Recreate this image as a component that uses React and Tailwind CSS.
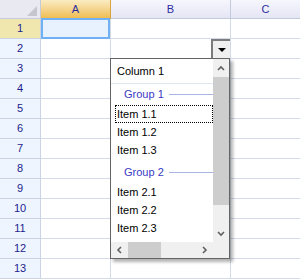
import React from 'react';

const rowNums = [1, 2, 3, 4, 5, 6, 7, 8, 9, 10, 11, 12, 13];

function Chevron({ dir }) {
  const paths = {
    up: 'M1 5 L4 2 L7 5',
    down: 'M1 2 L4 5 L7 2',
    left: 'M5 1 L2 4 L5 7',
    right: 'M2 1 L5 4 L2 7',
  };
  const box = dir === 'up' || dir === 'down' ? '0 0 8 7' : '0 0 7 8';
  return (
    <svg width={dir === 'up' || dir === 'down' ? 8 : 7} height={dir === 'up' || dir === 'down' ? 7 : 8} viewBox={box}>
      <path d={paths[dir]} fill="none" stroke="#606060" strokeWidth="1.6" />
    </svg>
  );
}

function GroupRow({ label, className }) {
  return (
    <div className={`flex items-center pl-[13px] text-[#3a3ac4] ${className}`}>
      <span>{label}</span>
      <div className="flex-1 h-px bg-[#a9b5e2] ml-[5px]"></div>
    </div>
  );
}

function Item({ label, focused }) {
  if (focused) {
    return (
      <div className="h-[18px] ml-[4px] pl-[1px] flex items-center border border-dotted border-black">
        {label}
      </div>
    );
  }
  return <div className="h-[18px] pl-[6px] flex items-center">{label}</div>;
}

function Dropdown() {
  return (
    <div className="absolute left-[110px] top-[58px] w-[120px] h-[201px] z-20 bg-white border border-[#646464] shadow-[3px_3px_3px_rgba(0,0,0,0.3)] flex flex-col">
      <div className="flex h-[183px]">
        <div className="flex-1 flex flex-col text-black">
          <div className="h-[25px] pl-[6px] flex items-center border-b border-[#e1e7f1]">Column 1</div>
          <GroupRow label="Group 1" className="h-[21px]" />
          <Item label="Item 1.1" focused />
          <Item label="Item 1.2" />
          <Item label="Item 1.3" />
          <GroupRow label="Group 2" className="h-[24px] pt-[3px]" />
          <Item label="Item 2.1" />
          <Item label="Item 2.2" />
          <Item label="Item 2.3" />
        </div>
        <div className="w-[16px] bg-[#f0f0f0] flex flex-col">
          <div className="h-[18px] flex items-center justify-center">
            <Chevron dir="up" />
          </div>
          <div className="h-[128px] bg-[#cdcdcd]"></div>
          <div className="flex-1"></div>
          <div className="h-[17px] flex items-center justify-center">
            <Chevron dir="down" />
          </div>
        </div>
      </div>
      <div className="flex flex-1 bg-[#f0f0f0]">
        <div className="w-[17px] flex items-center justify-center">
          <Chevron dir="left" />
        </div>
        <div className="w-[33px] bg-[#cdcdcd]"></div>
        <div className="flex-1"></div>
        <div className="w-[17px] flex items-center justify-center">
          <Chevron dir="right" />
        </div>
        <div className="w-[16px]"></div>
      </div>
    </div>
  );
}

export default function App() {
  return (
    <div className="relative w-[300px] h-[279px] overflow-hidden bg-white font-['Liberation_Sans',Arial,sans-serif] text-[11px] leading-none">
      <div className="flex h-[19px]">
        <div className="w-[41px] border-r border-b border-[#c3cadb] bg-[#e9e9f1] flex items-end justify-end pr-[3px] pb-[2px]">
          <svg width="10" height="10" viewBox="0 0 10 10">
            <polygon points="10,0 10,10 0,10" fill="#c6c6ce" />
          </svg>
        </div>
        <div className="w-[70px] border-r border-b border-[#d9a33f] bg-gradient-to-b from-[#fbecc2] to-[#eebd50] flex items-center justify-center text-[#2b2b9e]">
          A
        </div>
        <div className="w-[120px] border-r border-b border-[#c3cadb] bg-gradient-to-b from-[#f6f6fd] to-[#e5e6f5] flex items-center justify-center text-[#2b2b9e]">
          B
        </div>
        <div className="flex-1 border-b border-[#c3cadb] bg-gradient-to-b from-[#f6f6fd] to-[#e5e6f5] flex items-center justify-center text-[#2b2b9e]">
          C
        </div>
      </div>
      {rowNums.map((n) => (
        <div key={n} className="flex h-[20px]">
          <div
            className={`w-[41px] border-r border-b border-[#cbd3e4] flex items-center justify-center text-[#1d1d8e] ${
              n === 1 ? 'bg-[#f0e7ae]' : 'bg-[#eef5fe]'
            }`}
          >
            {n}
          </div>
          <div className="relative w-[70px] border-r border-b border-[#d4dbe8]">
            {n === 1 && (
              <div className="absolute -top-px left-0 right-0 -bottom-px z-10 border-2 border-[#70b1f4] bg-[#e8f2fe]"></div>
            )}
          </div>
          <div className="w-[120px] border-r border-b border-[#d4dbe8] flex justify-end">
            {n === 2 && (
              <div className="w-[19px] h-[19px] bg-[#f0f0f0] border-l-2 border-t-2 border-[#7c7c7c] flex items-center justify-center">
                <svg width="8" height="4" viewBox="0 0 8 4">
                  <polygon points="0,0 8,0 4,4" fill="#000" />
                </svg>
              </div>
            )}
          </div>
          <div className="flex-1 border-b border-[#d4dbe8]"></div>
        </div>
      ))}
      <Dropdown />
    </div>
  );
}
